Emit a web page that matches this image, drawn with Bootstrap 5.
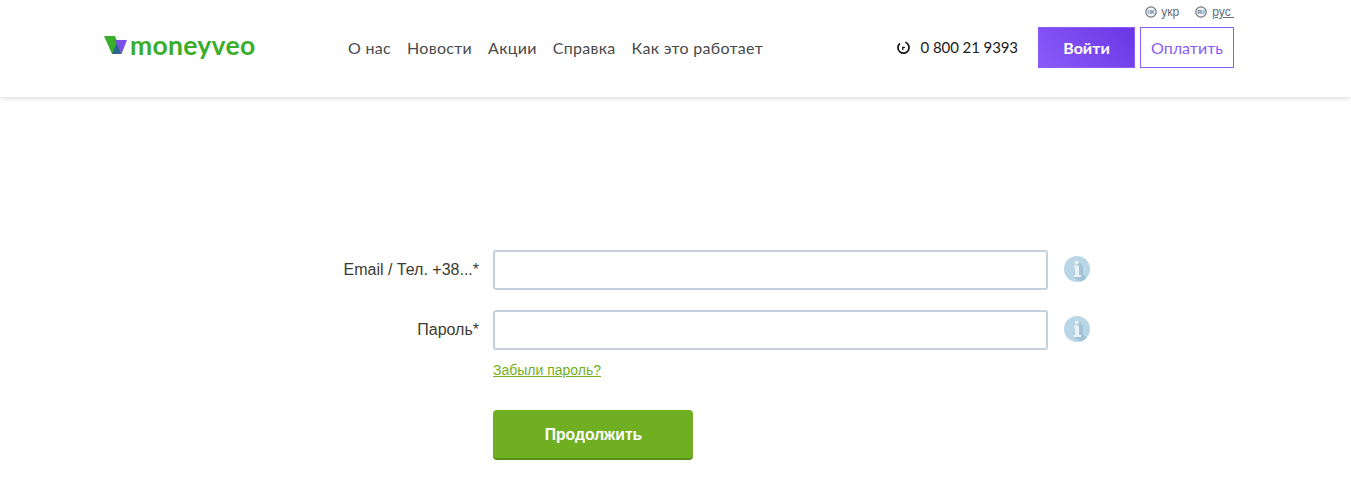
<!DOCTYPE html>
<html lang="ru">
<head>
<meta charset="utf-8">
<title>Moneyveo</title>
<link href="https://cdn.jsdelivr.net/npm/bootstrap@5.3.0/dist/css/bootstrap.min.css" rel="stylesheet">
<style>
body{background:#fff;font-family:"Liberation Sans",sans-serif;overflow:hidden}
.mv-head{height:97px;padding:0 117px 0 104px;box-shadow:0 1px 5px rgba(0,0,0,.16);position:relative}
.mv-langs{height:27px;padding-top:5px;font-size:12px;line-height:14px;color:#5f6b76;gap:16px}
.mv-lang{display:flex;align-items:center;align-self:flex-start;gap:4px}
.mv-lang-act span{text-decoration:underline;padding-left:1px}
.mv-lang svg{width:12px;height:12px}
.mv-main{height:41px}
.mv-logo{width:151px;gap:2px;color:#3aae2a}
.mv-logo svg{width:24px;height:19px;flex:none;margin-top:-5px}
.mv-logo-text{font-family:"Lato",sans-serif;font-weight:700;font-size:26.5px;line-height:25px;letter-spacing:.3px;margin-top:-5px}
.mv-nav{margin-left:93px;gap:16px;font-family:"Lato",sans-serif;font-size:16px;letter-spacing:.3px;color:#4a4a4a}
.mv-phone{margin-left:auto;margin-right:20px;gap:10px;font-family:"Lato",sans-serif;font-size:15px;color:#1c1c1c;letter-spacing:-.08px}
.mv-phone svg{width:15px;height:15px}
.mv-btn-in{width:97px;height:41px;border-radius:0;border:1px solid #8a5cf6;background:linear-gradient(45deg,#8b5cf8,#6a35e6);color:#fff;font-family:"Lato",sans-serif;font-weight:700;font-size:16px;padding:0}
.mv-btn-in:hover{color:#fff;background:linear-gradient(45deg,#8b5cf8,#6a35e6)}
.mv-btn-pay{width:94px;height:41px;margin-left:5px;border-radius:0;border:1px solid #8a5cf6;background:#fff;color:#8a5cf6;font-family:"Lato",sans-serif;font-size:16px;padding:0}
.mv-form{width:829px;margin:153px 0 0 261px}
.mv-row{height:40px;margin-bottom:20px;gap:14px}
.mv-lbl{width:218px;text-align:right;font-size:16px;color:#3c3c32;margin:0}
.mv-input{width:555px;height:40px;border:2px solid #c3d1dc;border-radius:3px;box-shadow:none;flex:none;padding:0 10px}
.mv-info{width:26px;height:26px;margin:-2px 0 0 2px;flex:none}
.mv-sub{padding-left:232px}
.mv-link{font-size:14px;line-height:20px;color:#72b021;display:block;margin-top:10px;text-decoration-color:#72b021}
.mv-go{display:block;width:200px;height:50px;margin-top:30px;background:#71af22;border:0;border-bottom:2px solid #5a8f1a;border-radius:4px;color:#fff;font-weight:700;font-size:15.7px;line-height:20px;padding:2px 0 0 1px}
.mv-go:hover{background:#71af22;color:#fff}
</style>
</head>
<body>
<header class="mv-head">
  <div class="mv-langs d-flex justify-content-end">
    <div class="mv-lang">
      <svg viewBox="0 0 12 12"><circle cx="6" cy="6" r="5.2" fill="#f1f3f4" stroke="#6f777d" stroke-width="1.2"/><text x="6" y="8" font-size="5" font-weight="700" text-anchor="middle" fill="#6f777d" font-family="Liberation Sans">UK</text></svg>
      <span>укр</span>
    </div>
    <div class="mv-lang mv-lang-act">
      <svg viewBox="0 0 12 12"><circle cx="6" cy="6" r="5.2" fill="#f1f3f4" stroke="#6f777d" stroke-width="1.2"/><text x="6" y="8" font-size="5" font-weight="700" text-anchor="middle" fill="#6f777d" font-family="Liberation Sans">RU</text></svg>
      <span>рус&nbsp;</span>
    </div>
  </div>
  <div class="mv-main d-flex align-items-center">
    <div class="mv-logo d-flex align-items-center">
      <svg viewBox="0 0 24 19"><polygon points="0,0 11,0 17.500,18 8,18" fill="#3aae2a"/><polygon points="11,4 23,4 17.500,18" fill="#7b4fe8"/><polygon points="12.500,7.500 17.500,18 8,18" fill="#2d6690"/></svg>
      <span class="mv-logo-text">moneyveo</span>
    </div>
    <nav class="mv-nav d-flex">
      <span>О нас</span><span>Новости</span><span>Акции</span><span>Справка</span><span>Как это работает</span>
    </nav>
    <div class="mv-phone d-flex align-items-center">
      <svg viewBox="0 0 15 15" fill="none" stroke="#111" stroke-width="1.7"><path d="M9.300 2.300a5.600 5.600 0 1 1-5.400 1"/><path d="M6.800 10V7.300h2" stroke-width="1.300"/></svg>
      <span>0 800 21 9393</span>
    </div>
    <button type="button" class="btn mv-btn-in">Войти</button>
    <button type="button" class="btn mv-btn-pay">Оплатить</button>
  </div>
</header>
<main class="mv-form">
  <form>
    <div class="mv-row d-flex align-items-center">
      <label class="mv-lbl" for="mvLogin">Email / Тел. +38...*</label>
      <input id="mvLogin" class="form-control mv-input" type="text">
      <svg class="mv-info" viewBox="0 0 26 26"><defs><clipPath id="mvClipA"><circle cx="13" cy="13" r="13"/></clipPath></defs><circle cx="13" cy="13" r="13" fill="#b9d6e6"/><polygon points="14.500,5 19,10 19,18 26,25 20,28 9,21" fill="#a3c3d6" clip-path="url(#mvClipA)"/><path d="M10 9.500h5V19h2v2H9.500v-2H11v-7.500h-1z" fill="#e8f2f7"/><circle cx="12.800" cy="6.500" r="2" fill="#e8f2f7"/></svg>
    </div>
    <div class="mv-row d-flex align-items-center mb-0">
      <label class="mv-lbl" for="mvPass">Пароль*</label>
      <input id="mvPass" class="form-control mv-input" type="password">
      <svg class="mv-info" viewBox="0 0 26 26"><defs><clipPath id="mvClipB"><circle cx="13" cy="13" r="13"/></clipPath></defs><circle cx="13" cy="13" r="13" fill="#b9d6e6"/><polygon points="14.500,5 19,10 19,18 26,25 20,28 9,21" fill="#a3c3d6" clip-path="url(#mvClipB)"/><path d="M10 9.500h5V19h2v2H9.500v-2H11v-7.500h-1z" fill="#e8f2f7"/><circle cx="12.800" cy="6.500" r="2" fill="#e8f2f7"/></svg>
    </div>
    <div class="mv-sub">
      <a href="#" class="mv-link">Забыли пароль?</a>
      <button type="button" class="btn mv-go">Продолжить</button>
    </div>
  </form>
</main>
<script src="https://cdn.jsdelivr.net/npm/bootstrap@5.3.0/dist/js/bootstrap.bundle.min.js"></script>
</body>
</html>
